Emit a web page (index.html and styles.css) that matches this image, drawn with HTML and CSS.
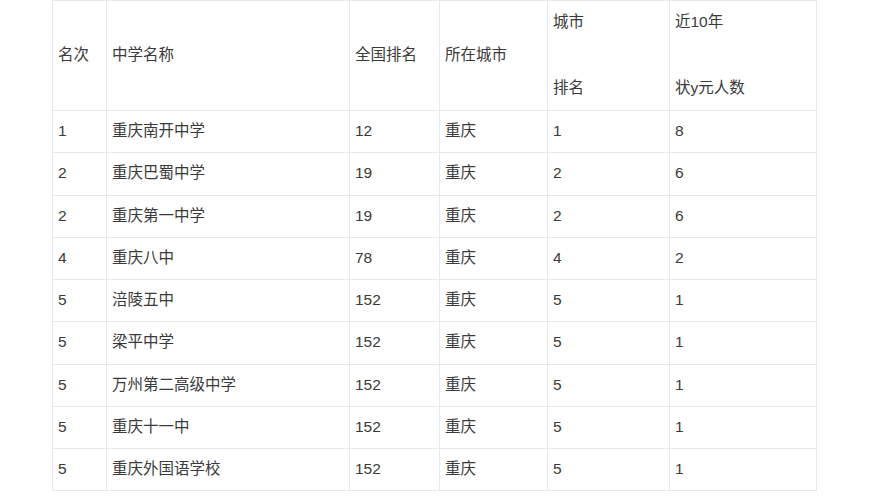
FILE: index.html
```html
<!DOCTYPE html>
<html lang="zh-CN">
<head>
<meta charset="utf-8">
<title>重庆中学排名</title>
<link rel="stylesheet" href="styles.css">
</head>
<body>
<table class="rank">
  <colgroup>
    <col class="c1"><col class="c2"><col class="c3"><col class="c4"><col class="c5"><col class="c6">
  </colgroup>
  <thead>
    <tr class="head">
      <td>名次</td>
      <td>中学名称</td>
      <td>全国排名</td>
      <td>所在城市</td>
      <td><div class="two"><span>城市</span><span>排名</span></div></td>
      <td><div class="two"><span>近10年</span><span>状y元人数</span></div></td>
    </tr>
  </thead>
  <tbody>
    <tr><td>1</td><td>重庆南开中学</td><td>12</td><td>重庆</td><td>1</td><td>8</td></tr>
    <tr><td>2</td><td>重庆巴蜀中学</td><td>19</td><td>重庆</td><td>2</td><td>6</td></tr>
    <tr><td>2</td><td>重庆第一中学</td><td>19</td><td>重庆</td><td>2</td><td>6</td></tr>
    <tr><td>4</td><td>重庆八中</td><td>78</td><td>重庆</td><td>4</td><td>2</td></tr>
    <tr><td>5</td><td>涪陵五中</td><td>152</td><td>重庆</td><td>5</td><td>1</td></tr>
    <tr><td>5</td><td>梁平中学</td><td>152</td><td>重庆</td><td>5</td><td>1</td></tr>
    <tr><td>5</td><td>万州第二高级中学</td><td>152</td><td>重庆</td><td>5</td><td>1</td></tr>
    <tr><td>5</td><td>重庆十一中</td><td>152</td><td>重庆</td><td>5</td><td>1</td></tr>
    <tr><td>5</td><td>重庆外国语学校</td><td>152</td><td>重庆</td><td>5</td><td>1</td></tr>
  </tbody>
</table>
</body>
</html>
```

FILE: styles.css
```css
html, body {
  margin: 0;
  padding: 0;
  background: #ffffff;
}

body {
  font-family: "Liberation Sans", "Noto Sans CJK SC", sans-serif;
  font-size: 15.5px;
  color: #3a3a3a;
}

.rank {
  margin-left: 52px;
  border-collapse: collapse;
  table-layout: fixed;
  width: 765px;
}

.rank td {
  border: 1px solid #e6e9ef;
  padding: 0 0 1px 5px;
  vertical-align: middle;
  text-align: left;
  white-space: nowrap;
  line-height: 22px;
}

.c1 { width: 54px; }
.c2 { width: 243px; }
.c3 { width: 90px; }
.c4 { width: 108px; }
.c5 { width: 122px; }
.c6 { width: 147px; }

.head td {
  height: 108px;
}

.rank tbody td {
  height: 40.25px;
}

.two {
  display: flex;
  flex-direction: column;
  gap: 44px;
}
```
